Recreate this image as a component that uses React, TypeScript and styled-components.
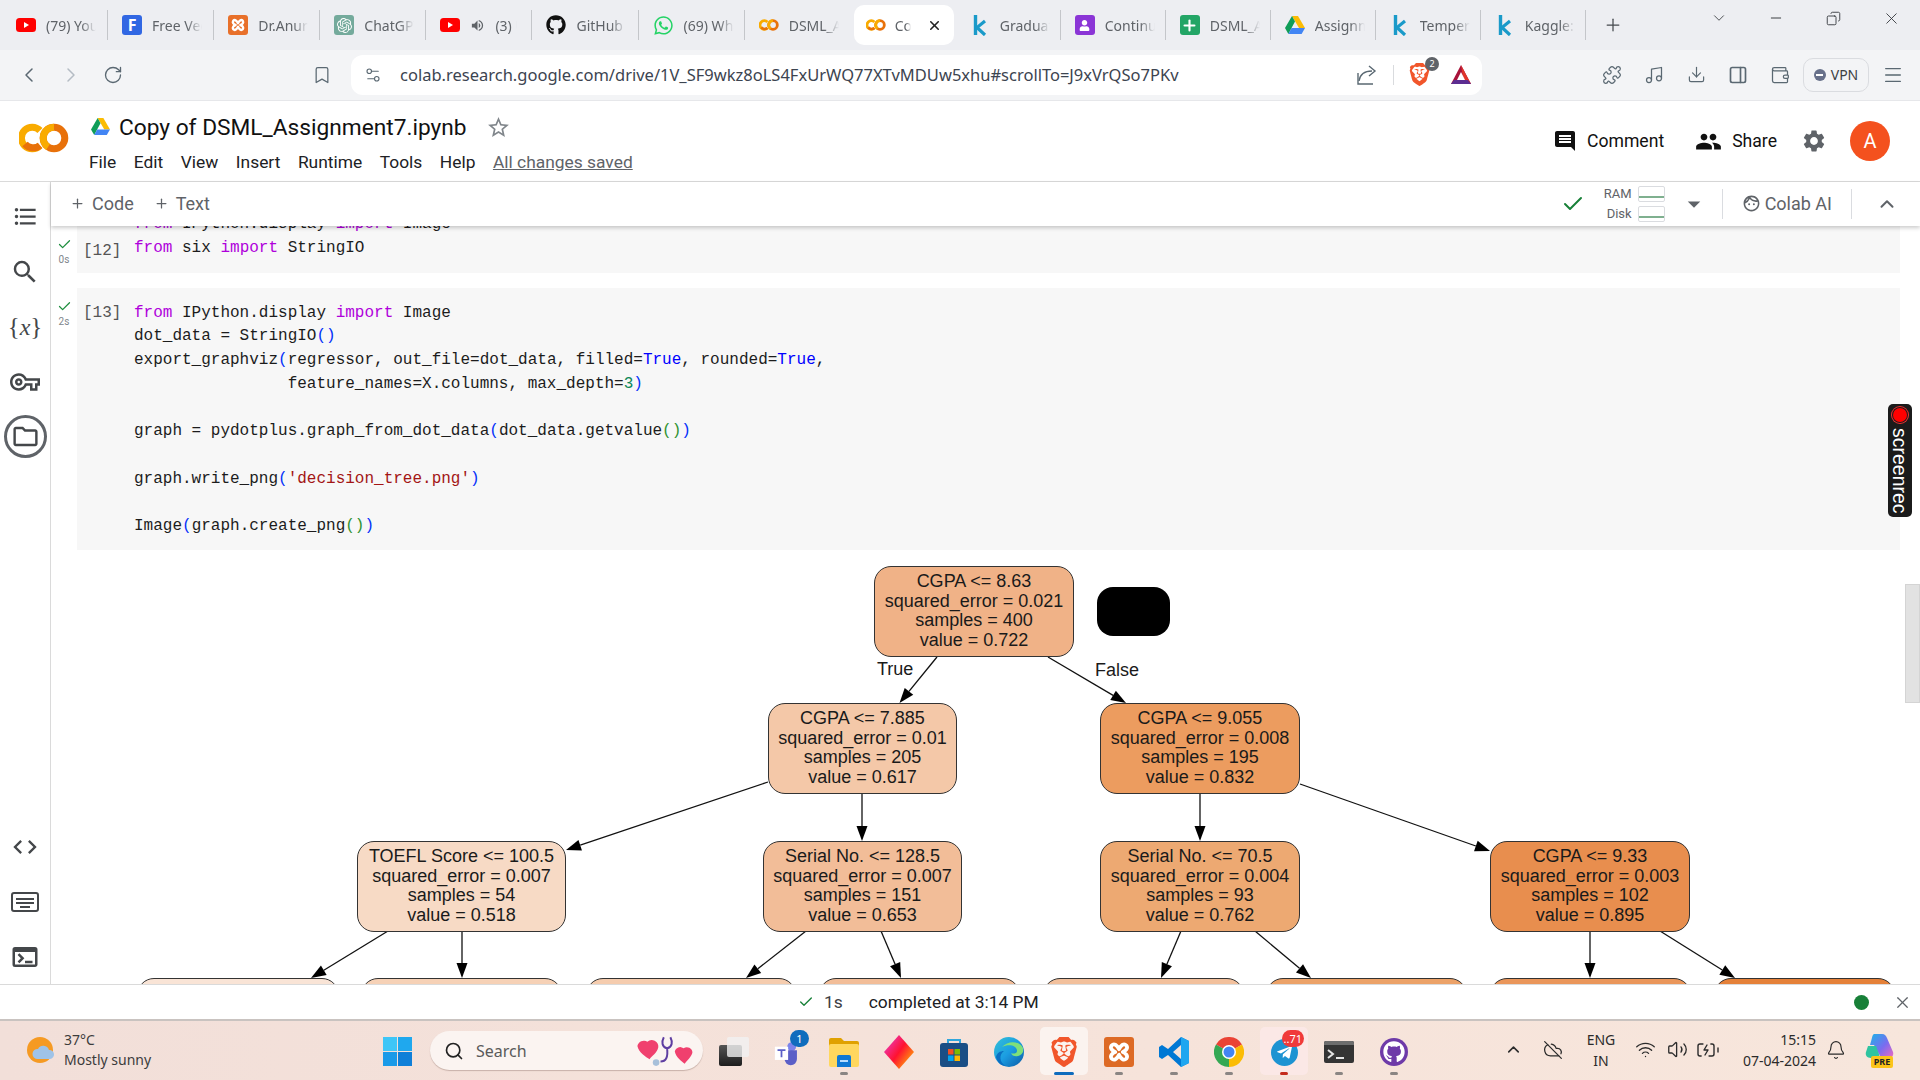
import React from "react";
import styled, { createGlobalStyle } from "styled-components";
import {
  ChevronDown, ChevronLeft, ChevronRight, ChevronUp, RotateCw, Bookmark, Settings2, Puzzle, Music,
  Download, PanelRight, Wallet, Menu, Plus, X, Minus, Copy, Check, Search, Wifi, Volume2, BatteryCharging, Bell, CloudOff,
} from "lucide-react";
import {
  MdComment, MdPeople, MdSettings, MdStarBorder, MdFormatListBulleted, MdSearch, MdOutlineVpnKey, MdOutlineFolder,
  MdCode, MdOutlineTerminal, MdArrowDropDown, MdOutlineFace, MdVolumeUp,
} from "react-icons/md";
import { FaGithub, FaWhatsapp, FaTelegramPlane, FaUser } from "react-icons/fa";
import { SiOpenai, SiBrave } from "react-icons/si";

const Global = createGlobalStyle`
  html, body { margin: 0; padding: 0; background: #fff; overflow: hidden; }
  * { box-sizing: border-box; }
`;

const Page = styled.div`
  position: relative;
  width: 1920px;
  height: 1080px;
  display: flex;
  flex-direction: column;
  overflow: hidden;
  font-family: "Noto Sans", sans-serif;
  color: #202124;
`;

/* browser tabs */
const TabStrip = styled.div`
  height: 50px;
  flex: none;
  display: flex;
  align-items: center;
  padding-left: 2px;
  background: #edeef2;
`;

const Tab = styled.div<{ $sep?: boolean; $w: number }>`
  position: relative;
  width: ${(p) => p.$w}px;
  height: 30px;
  flex: none;
  display: flex;
  align-items: center;
  gap: 10px;
  padding-left: 14px;
  &::after {
    content: "";
    position: absolute;
    right: 0;
    top: 0;
    bottom: 0;
    width: 1px;
    background: ${(p) => (p.$sep === false ? "transparent" : "#c4c6ca")};
  }
`;

const ActiveTab = styled.div`
  width: 100px;
  height: 40px;
  flex: none;
  margin: 0 2px 0 3px;
  display: flex;
  align-items: center;
  gap: 9px;
  padding-left: 12px;
  background: #fff;
  border-radius: 10px;
  font-size: 14px;
  color: #5f6368;
`;

const TabTitle = styled.span<{ $w?: number }>`
  width: ${(p) => p.$w ?? 50}px;
  overflow: hidden;
  white-space: nowrap;
  font-size: 14px;
  color: #5f6368;
  -webkit-mask-image: linear-gradient(90deg, #000 70%, transparent);
`;

const BoxIcon = styled.div<{ $bg: string; $size?: number; $round?: boolean }>`
  width: ${(p) => p.$size ?? 20}px;
  height: ${(p) => p.$size ?? 20}px;
  flex: none;
  display: flex;
  align-items: center;
  justify-content: center;
  border-radius: ${(p) => (p.$round ? "50%" : "3px")};
  background: ${(p) => p.$bg};
  color: #fff;
`;

const LetterF = styled.b`
  font-size: 16px;
`;

const NewTab = styled.div`
  width: 40px;
  flex: none;
  margin-left: 7px;
  display: flex;
  justify-content: center;
  color: #45494e;
`;

const WindowControls = styled.div`
  margin-left: auto;
  align-self: flex-start;
  height: 36px;
  display: flex;
`;

const WinSlot = styled.div`
  width: 57.5px;
  display: flex;
  align-items: center;
  justify-content: center;
  color: #2f3337;
`;

/* browser toolbar */
const BrowserBar = styled.div`
  height: 51px;
  flex: none;
  display: flex;
  align-items: center;
  padding: 0 0 1px 8px;
  background: #f3f4f6;
  border-bottom: 1px solid #e6e7ea;
`;

const BarSlot = styled.div<{ $ml?: number; $c?: string }>`
  width: 42px;
  flex: none;
  margin-left: ${(p) => p.$ml ?? 0}px;
  display: flex;
  align-items: center;
  justify-content: center;
  color: ${(p) => p.$c ?? "#5a6872"};
`;

const AddressBar = styled.div`
  width: 1131px;
  height: 40px;
  flex: none;
  margin-left: 8px;
  display: flex;
  align-items: center;
  padding-left: 13px;
  background: #fff;
  border-radius: 12px;
  color: #5a6872;
`;

const Url = styled.span`
  margin-left: 18px;
  font-size: 16.5px;
  color: #3c4450;
  white-space: nowrap;
`;

const AddressEnd = styled.div`
  margin-left: auto;
  padding-right: 10px;
  display: flex;
  align-items: center;
`;

const BarDivider = styled.div`
  width: 1px;
  height: 20px;
  margin: 0 14px 0 15px;
  background: #d9dbde;
`;

const BraveBadge = styled.div`
  position: relative;
  margin-right: 19px;
  display: flex;
  color: #f1562b;
`;

const CountDot = styled.span`
  position: absolute;
  top: -6px;
  right: -8px;
  width: 14px;
  height: 14px;
  border-radius: 50%;
  background: #5f6368;
  color: #fff;
  font-size: 9px;
  line-height: 14px;
  text-align: center;
`;

const VpnPill = styled.div`
  width: 66px;
  height: 34px;
  flex: none;
  margin-left: 2px;
  display: flex;
  align-items: center;
  justify-content: center;
  gap: 5px;
  border: 1px solid #dadce0;
  border-radius: 10px;
  font-size: 14px;
  color: #3c4043;
`;

const VpnDot = styled.span`
  width: 12px;
  height: 12px;
  border-radius: 50%;
  background: #67708a;
  display: flex;
  align-items: center;
  justify-content: center;
  &::after { content: ""; width: 7px; height: 2px; background: #fff; }
`;

/* colab header */
const ColabHeader = styled.header`
  height: 81px;
  flex: none;
  display: flex;
  background: #fff;
  border-bottom: 1px solid #dadada;
  font-family: Roboto, sans-serif;
`;

const LogoWrap = styled.div`
  width: 50px;
  flex: none;
  margin: 22px 0 0 19px;
`;

const TitleCol = styled.div`
  margin-left: 20px;
  padding-top: 12px;
`;

const TitleRow = styled.div`
  height: 28px;
  display: flex;
  align-items: center;
  padding-left: 2px;
`;

const Title = styled.h1`
  margin: 0 0 0 9px;
  font-size: 22.7px;
  font-weight: 400;
  color: #111;
`;

const StarWrap = styled.span`
  margin-left: 19px;
  display: flex;
  color: #80868b;
`;

const MenuRow = styled.nav`
  height: 24px;
  margin-top: 9px;
  display: flex;
  align-items: center;
  gap: 17.5px;
  font-size: 17.4px;
  color: #202124;
`;

const Saved = styled.span`
  color: #5f6368;
  text-decoration: underline;
`;

const HeaderActions = styled.div`
  margin-left: auto;
  padding-right: 30px;
  display: flex;
  align-items: center;
  font-size: 17.6px;
`;

const ActionBtn = styled.div<{ $ml?: number; $gap?: number }>`
  margin-left: ${(p) => p.$ml ?? 0}px;
  display: flex;
  align-items: center;
  gap: ${(p) => p.$gap ?? 10}px;
  color: #111;
`;

const Avatar = styled.div`
  width: 40px;
  height: 40px;
  margin-left: 23px;
  border-radius: 50%;
  background: #f4511e;
  color: #fff;
  font-size: 20px;
  display: flex;
  align-items: center;
  justify-content: center;
`;

/* body */
const Body = styled.div`
  flex: 1;
  min-height: 0;
  display: flex;
  font-family: Roboto, sans-serif;
`;

const Sidebar = styled.aside`
  width: 51px;
  flex: none;
  padding-top: 7px;
  display: flex;
  flex-direction: column;
  justify-content: space-between;
  border-right: 1px solid #dadada;
  color: #44474a;
`;

const SideGroup = styled.div`
  display: flex;
  flex-direction: column;
`;

const SideSlot = styled.div`
  height: 55px;
  display: flex;
  align-items: center;
  justify-content: center;
`;

const FolderRing = styled.div`
  width: 43px;
  height: 43px;
  border: 3px solid #5f6368;
  border-radius: 50%;
  display: flex;
  align-items: center;
  justify-content: center;
`;

const VarText = styled.span`
  font-family: "Liberation Serif", serif;
  font-size: 25px;
  & i { font-size: 24px; }
`;

const Workspace = styled.div`
  flex: 1;
  min-width: 0;
  display: flex;
  flex-direction: column;
`;

const Toolbar = styled.div`
  position: relative;
  z-index: 2;
  height: 44px;
  flex: none;
  display: flex;
  align-items: center;
  padding: 0 20px 1px 19px;
  background: #fff;
  box-shadow: 0 2px 4px rgba(0, 0, 0, 0.2);
  font-size: 18px;
  color: #5f6368;
`;

const AddBtn = styled.div`
  margin-right: 20px;
  display: flex;
  align-items: center;
  gap: 7px;
`;

const ToolbarRight = styled.div`
  margin-left: auto;
  padding-right: 2px;
  display: flex;
  align-items: center;
`;

const Resources = styled.div`
  margin-left: 19px;
  display: grid;
  grid-template-columns: auto 27px;
  column-gap: 6px;
  row-gap: 4px;
  font-size: 13px;
  text-align: right;
  line-height: 16px;
`;

const Meter = styled.div`
  height: 16px;
  border: 1px solid #dadce0;
  border-radius: 2px;
  display: flex;
  align-items: flex-end;
  padding-bottom: 3px;
  &::after { content: ""; width: 100%; height: 2px; background: #7fb08f; }
`;

const ToolDivider = styled.div<{ $ml: number; $mr: number }>`
  width: 1px;
  height: 30px;
  margin: 0 ${(p) => p.$mr}px 0 ${(p) => p.$ml}px;
  background: #dadce0;
`;

const ColabAi = styled.div`
  display: flex;
  align-items: center;
  gap: 4px;
  color: #5f6368;
`;

const CaretWrap = styled.span`
  margin-left: 14px;
  display: flex;
`;

const Scroller = styled.div`
  position: relative;
  flex: 1;
  min-height: 0;
  overflow: hidden;
  padding-right: 20px;
`;

const Cell = styled.div<{ $mt: number }>`
  margin-top: ${(p) => p.$mt}px;
  display: flex;
`;

const Gutter = styled.div<{ $pt: number }>`
  width: 26px;
  flex: none;
  padding-top: ${(p) => p.$pt}px;
  display: flex;
  flex-direction: column;
  align-items: center;
  color: #1e8e3e;
`;

const Elapsed = styled.span`
  margin-top: 2px;
  font-size: 10px;
  line-height: 12px;
  color: #80868b;
`;

const CellBody = styled.div<{ $pt: number; $pb: number }>`
  flex: 1;
  display: flex;
  padding: ${(p) => p.$pt}px 0 ${(p) => p.$pb}px;
  background: #f7f7f7;
`;

const ExecCount = styled.span<{ $last?: boolean }>`
  width: 57px;
  flex: none;
  align-self: ${(p) => (p.$last ? "flex-end" : "flex-start")};
  margin-bottom: ${(p) => (p.$last ? "-3px" : "0")};
  padding-left: 6px;
  font-family: "Liberation Mono", monospace;
  font-size: 16px;
  line-height: 23.75px;
  color: #555;
`;

const Code = styled.pre`
  margin: 0;
  font-family: "Liberation Mono", monospace;
  font-size: 16px;
  line-height: 23.75px;
  color: #1c1c1c;
`;

const colors = { k: "#af00db", c: "#0000ff", p: "#0431fa", g: "#319331", s: "#a31515", n: "#098658" };

const Tok = styled.span<{ $t: keyof typeof colors }>`
  color: ${(p) => colors[p.$t]};
`;

/* decision tree */
const Diagram = styled.div`
  position: relative;
  height: 440px;
`;

const EdgeLayer = styled.svg`
  position: absolute;
  inset: 0;
  width: 100%;
  height: 100%;
`;

const TreeNode = styled.div<{ $x: number; $y: number; $w: number; $bg: string }>`
  position: absolute;
  left: ${(p) => p.$x}px;
  top: ${(p) => p.$y}px;
  width: ${(p) => p.$w}px;
  height: 91px;
  padding-top: 5px;
  border: 1.5px solid #333;
  border-radius: 17px;
  background: ${(p) => p.$bg};
  font-family: "Liberation Sans", sans-serif;
  font-size: 18px;
  line-height: 19.7px;
  text-align: center;
  white-space: nowrap;
  color: #1a1a1a;
`;

const EdgeLabel = styled.span<{ $x: number; $y: number }>`
  position: absolute;
  left: ${(p) => p.$x}px;
  top: ${(p) => p.$y}px;
  font-family: "Liberation Sans", sans-serif;
  font-size: 18px;
  line-height: 20px;
  color: #1a1a1a;
`;

const Redaction = styled.div`
  position: absolute;
  left: 1046px;
  top: 37px;
  width: 73px;
  height: 49px;
  border-radius: 16px;
  background: #000;
`;

const ScrollThumb = styled.div`
  position: absolute;
  right: 0;
  top: 358px;
  width: 15px;
  height: 119px;
  background: #e2e2e2;
  border: 1px solid #d4d4d4;
`;

/* status bar */
const StatusBar = styled.div`
  height: 37px;
  flex: none;
  position: relative;
  z-index: 2;
  display: flex;
  align-items: center;
  padding-left: 798px;
  background: #fff;
  border-top: 1px solid #dadada;
  border-bottom: 2px solid #c9c3c0;
  font-family: Roboto, sans-serif;
  font-size: 17.4px;
  color: #3c4043;
`;

const Completed = styled.span`
  margin-left: 26px;
  color: #202124;
`;

const ElapsedTotal = styled.span`
  margin-left: 10px;
`;

const StatusEnd = styled.div`
  margin-left: auto;
  padding-right: 8px;
  display: flex;
  align-items: center;
  gap: 24px;
  color: #5f6368;
`;

const GreenDot = styled.span`
  width: 15px;
  height: 15px;
  border-radius: 50%;
  background: #188038;
`;

/* windows taskbar */
const Taskbar = styled.div`
  height: 59px;
  flex: none;
  display: flex;
  align-items: flex-start;
  padding-left: 27px;
  background: linear-gradient(90deg, #f2dfd9, #f6e3da 60%, #f7e6dc);
  color: #202020;
`;

const Weather = styled.div`
  width: 356px;
  height: 57px;
  flex: none;
  display: flex;
  align-items: center;
  gap: 9px;
`;

const WeatherText = styled.div`
  font-size: 14px;
  line-height: 20px;
  color: #3c3c3c;
`;

const WinLogo = styled.div`
  width: 29px;
  height: 29px;
  flex: none;
  margin-top: 16px;
  display: grid;
  grid-template-columns: 1fr 1fr;
  gap: 1px;
`;

const WinPane = styled.span<{ $bg: string }>`
  background: ${(p) => p.$bg};
`;

const SearchPill = styled.div`
  width: 273px;
  height: 39px;
  flex: none;
  margin: 10px 0 0 18px;
  display: flex;
  align-items: center;
  gap: 12px;
  padding: 0 4px 0 14px;
  background: #fbf4f1;
  border-radius: 20px;
  box-shadow: 0 1px 1px rgba(120, 90, 80, 0.35);
  font-size: 16px;
  color: #5a5a5a;
`;

const SearchArt = styled.div`
  margin-left: auto;
  display: flex;
`;

const AppRow = styled.div`
  margin-left: 3.5px;
  display: flex;
`;

const TaskItem = styled.div<{ $tile?: string }>`
  position: relative;
  width: 55px;
  height: 59px;
  flex: none;
  padding-top: 16px;
  display: flex;
  flex-direction: column;
  align-items: center;
  gap: 5px;
  &::before {
    content: "";
    display: ${(p) => (p.$tile ? "block" : "none")};
    position: absolute;
    inset: 6px 3.5px 5px;
    border-radius: 5px;
    background: ${(p) => p.$tile};
  }
  & > * { position: relative; }
`;

const AppIcon = styled.div`
  width: 30px;
  height: 30px;
  display: flex;
  align-items: center;
  justify-content: center;
`;

const Pip = styled.span<{ $c?: string; $w?: number }>`
  width: ${(p) => p.$w ?? 8}px;
  height: 3px;
  border-radius: 2px;
  background: ${(p) => p.$c ?? "#8a8583"};
`;

const NoPip = styled.span`
  height: 3px;
`;

const Badge = styled.span<{ $bg: string; $w: number }>`
  position: absolute;
  top: -7px;
  right: -5px;
  min-width: ${(p) => p.$w}px;
  height: 17px;
  padding: 0 2px;
  border-radius: 9px;
  background: ${(p) => p.$bg};
  color: #fff;
  font-size: 11px;
  line-height: 17px;
  text-align: center;
`;

const Tray = styled.div`
  margin-left: auto;
  padding-right: 16px;
  height: 57px;
  display: flex;
  align-items: center;
`;

const TraySlot = styled.div<{ $w: number }>`
  width: ${(p) => p.$w}px;
  flex: none;
  display: flex;
  flex-direction: column;
  align-items: center;
  justify-content: center;
  font-size: 14px;
  line-height: 21px;
  color: #2b2b2b;
`;

const Clock = styled.div`
  width: 92px;
  flex: none;
  font-size: 14px;
  line-height: 21px;
  text-align: right;
  color: #2b2b2b;
`;

const CopilotWrap = styled.div`
  position: relative;
  width: 30px;
  height: 34px;
`;

const PreTag = styled.span`
  position: absolute;
  left: 6px;
  bottom: -1px;
  width: 22px;
  height: 12px;
  border-radius: 2px;
  background: #fcc419;
  color: #222;
  font-size: 9px;
  font-weight: 700;
  line-height: 12px;
  text-align: center;
`;

const ScreenRec = styled.div`
  position: absolute;
  left: 1888px;
  top: 404px;
  width: 24px;
  height: 113px;
  z-index: 3;
  display: flex;
  flex-direction: column;
  align-items: center;
  padding-top: 4px;
  background: #1b1b1b;
  border-radius: 5px;
`;

const RecDot = styled.span`
  width: 14px;
  height: 14px;
  flex: none;
  border-radius: 50%;
  background: #f00;
  box-shadow: 0 0 0 1px #1b1b1b, 0 0 0 2px #e33;
`;

const RecText = styled.span`
  margin-top: 6px;
  writing-mode: vertical-rl;
  font-family: "Liberation Sans", sans-serif;
  font-size: 19.5px;
  line-height: 22px;
  color: #fff;
`;

/* brand drawings */
const Youtube = () => (
  <svg width="20" height="14" viewBox="0 0 20 14">
    <rect width="20" height="14" rx="3.5" fill="#f00" />
    <path d="M8 4l5 3-5 3z" fill="#fff" />
  </svg>
);

const KaggleK = () => (
  <svg width="20" height="22" viewBox="0 0 20 22" fill="none" stroke="#1a9ac9">
    <path d="M5.500 1v20" strokeWidth="3.400" />
    <path d="M15 7l-8 6.500 8 7.500" strokeWidth="3.200" />
  </svg>
);

const XamppMark = ({ s }: { s: number }) => (
  <svg width={s} height={s} viewBox="0 0 30 30" fill="none" stroke="#fff" strokeWidth="4" strokeLinejoin="round">
    <path d="M7 8c3-3 6 0 8 4 2-4 5-7 8-4 2 3-1 6-4 7 3 1 6 4 4 7-3 3-6 0-8-4-2 4-5 7-8 4-2-3 1-6 4-7-3-1-6-4-4-7z" />
  </svg>
);

const ColabLogo = ({ w = 50 }: { w?: number }) => (
  <svg width={w} height={(w * 30) / 50} viewBox="0 0 50 30" fill="none" strokeWidth="7">
    <path d="M21 7.500A10.800 10.800 0 1 0 21 22.500" stroke="#f9ab00" />
    <path d="M6 21A10.800 10.800 0 0 0 21 22.500" stroke="#e8710a" />
    <circle cx="35" cy="15" r="10.800" stroke="#e8710a" />
    <path d="M35 4.200A10.800 10.800 0 0 0 29 24" stroke="#f9ab00" />
  </svg>
);

const Drive = ({ s = 20 }: { s?: number }) => (
  <svg width={s} height={(s * 18) / 20} viewBox="0 0 20 18">
    <path d="M7 0h6l7 12h-6z" fill="#fbbc04" />
    <path d="M7 0l3 5.500L3.400 18 0 12z" fill="#0f9d58" />
    <path d="M6.500 12H20l-3.400 6H3.400z" fill="#4285f4" />
  </svg>
);

const ShareOut = () => (
  <svg width="22" height="22" viewBox="0 0 22 22" fill="none" stroke="currentColor" strokeWidth="1.400">
    <path d="M2 9v11h15" />
    <path d="M3 17c1-7 6-10 13-10" />
    <path d="M13 2l6 5-6 5" />
  </svg>
);

const KeyboardPanel = () => (
  <svg width="28" height="22" viewBox="0 0 28 22" fill="none" stroke="currentColor" strokeWidth="2">
    <rect x="1" y="2" width="26" height="18" rx="2" />
    <path d="M5 8h18" />
    <path d="M5 12h18" />
    <path d="M9 16h10" />
  </svg>
);

const Chrome = () => (
  <svg width="30" height="30" viewBox="0 0 30 30">
    <path d="M15 15L2 7.500A15 15 0 0 1 28 7.500z" fill="#ea4335" />
    <path d="M15 15L28 7.500A15 15 0 0 1 15 30z" fill="#fbbc04" />
    <path d="M15 15L15 30A15 15 0 0 1 2 7.500z" fill="#34a853" />
    <circle cx="15" cy="15" r="7" fill="#fff" />
    <circle cx="15" cy="15" r="5.500" fill="#4285f4" />
  </svg>
);

const Edge = () => (
  <svg width="30" height="30" viewBox="0 0 30 30">
    <defs>
      <linearGradient id="edg" x1="0" y1="0" x2="1" y2="1">
        <stop offset="0" stopColor="#35c1d5" />
        <stop offset="0.5" stopColor="#1b9de2" />
        <stop offset="1" stopColor="#0c59a4" />
      </linearGradient>
    </defs>
    <circle cx="15" cy="15" r="15" fill="url(#edg)" />
    <path d="M29 11C26 4 14 3 8 10c6-3 15-2 15 4 0 3-5 3-6 2 1 4 9 5 12-1z" fill="#7fe07a" />
    <path d="M10 14c-5 3-5 12 2 15-5 0-9-4-10-9 1-4 4-6 8-6z" fill="#0a6fc2" />
  </svg>
);

const VsCode = () => (
  <svg width="30" height="30" viewBox="0 0 30 30">
    <path fillRule="evenodd" d="M22 0l8 4v22l-8 4-13-12-6 4-3-2v-10l3-2 6 4zM22 8l-8 7 8 7z" fill="#0078d4" />
    <path d="M22 0l8 4v22l-8 4z" fill="#1fa6f0" />
  </svg>
);

const TaskView = () => (
  <svg width="30" height="30" viewBox="0 0 30 30">
    <defs>
      <linearGradient id="tv" x1="0" y1="0" x2="0" y2="1">
        <stop offset="0" stopColor="#555" />
        <stop offset="1" stopColor="#1d1d1d" />
      </linearGradient>
    </defs>
    <rect x="0" y="8" width="23" height="21" rx="2" fill="url(#tv)" />
    <rect x="8" y="0" width="22" height="20" rx="2" fill="#f1f1f1" opacity="0.8" />
  </svg>
);

const Teams = () => (
  <svg width="34" height="30" viewBox="0 0 34 30">
    <circle cx="20" cy="9" r="5" fill="#7b83eb" />
    <path d="M12 13h14v10a7 7 0 0 1-14 0z" fill="#5b5fc7" />
    <rect x="1" y="9" width="15" height="15" fill="#fff" />
    <path d="M4 12h9v2H9.500v7h-2v-7H4z" fill="#5b5fc7" />
  </svg>
);

const FolderApp = () => (
  <svg width="30" height="30" viewBox="0 0 30 30">
    <path d="M0 3a2 2 0 0 1 2-2h10l3 3h13a2 2 0 0 1 2 2v3H0z" fill="#e0a100" />
    <rect y="7" width="30" height="23" rx="2" fill="#ffd75e" />
    <path d="M8 20a2 2 0 0 1 2-2h10a2 2 0 0 1 2 2v10H8z" fill="#0f78d4" />
    <rect x="11" y="23" width="8" height="2" fill="#b5dcff" />
  </svg>
);

const Diamond = () => (
  <svg width="30" height="34" viewBox="0 0 30 34">
    <defs>
      <linearGradient id="dia" x1="0" y1="0.1" x2="1" y2="0.9">
        <stop offset="0" stopColor="#e83fd0" />
        <stop offset="0.5" stopColor="#ff1230" />
        <stop offset="1" stopColor="#ffc400" />
      </linearGradient>
    </defs>
    <path d="M15 0l15 17-15 17L0 17z" fill="url(#dia)" />
  </svg>
);

const Store = () => (
  <svg width="30" height="30" viewBox="0 0 30 30">
    <path d="M9 6V3h12v3" fill="none" stroke="#30a6dc" strokeWidth="2" />
    <rect x="1" y="6" width="28" height="24" rx="3" fill="#1a4e85" />
    <rect x="9" y="12" width="5.500" height="5.500" fill="#f25022" />
    <rect x="15.500" y="12" width="5.500" height="5.500" fill="#7fba00" />
    <rect x="9" y="18.500" width="5.500" height="5.500" fill="#00a4ef" />
    <rect x="15.500" y="18.500" width="5.500" height="5.500" fill="#ffb900" />
  </svg>
);

const TerminalApp = () => (
  <svg width="30" height="24" viewBox="0 0 30 24">
    <rect width="30" height="22" y="1" rx="2" fill="#343434" />
    <path d="M0 3a2 2 0 0 1 2-2h26a2 2 0 0 1 2 2v2H12V5H0z" fill="#6d6d6d" />
    <path d="M4 10l5 4-5 4" fill="none" stroke="#e4e4e4" strokeWidth="2" />
    <path d="M12 18h8" stroke="#e4e4e4" strokeWidth="2" />
  </svg>
);

const Hearts = () => (
  <svg width="66" height="31" viewBox="0 0 60 28">
    <path d="M4 10a6 6 0 0 1 9-4 6 6 0 0 1 10 5c-1 5-6 8-8 11-3-2-10-6-11-12z" fill="#f0406e" />
    <path d="M38 15a5 5 0 0 1 8-3 5 5 0 0 1 8 4c-1 4-5 7-7 10-3-2-8-6-9-11z" fill="#f0406e" />
    <path d="M28 2c-2 4-2 9 3 10 5-1 5-6 3-10M31 12c1 8-1 12-6 12" fill="none" stroke="#5e3ea1" strokeWidth="1.800" />
    <circle cx="21" cy="25" r="3" fill="#a7c0da" />
  </svg>
);

const Copilot = () => (
  <svg width="30" height="26" viewBox="0 0 30 26">
    <defs>
      <linearGradient id="cop" x1="0" y1="0" x2="1" y2="1">
        <stop offset="0" stopColor="#1bb3e8" />
        <stop offset="0.55" stopColor="#7a6cf0" />
        <stop offset="1" stopColor="#f06ac0" />
      </linearGradient>
    </defs>
    <path d="M9 1h8c3 0 4 2 5 4l6 14c1 3-1 6-4 6h-5c-3 0-4-2-5-4L9 12H5C7 6 7 2 9 1z" fill="url(#cop)" />
    <path d="M3 13h8l3 8c1 2 0 4-2 4H6c-4 0-6-3-5-6z" fill="#2fc4a0" />
  </svg>
);

const Triangle = () => (
  <svg width="22" height="22" viewBox="0 0 22 22">
    <path d="M11 1L21 20H1z" fill="#a8123a" />
    <path d="M11 1L21 20H14z" fill="#e0342a" />
    <path d="M1 20h20l-3-4H4z" fill="#5c2d91" />
    <path d="M11 8l4 8H7z" fill="#fff" />
  </svg>
);

const SpeakerTab = () => (
  <>
    <Youtube />
    <MdVolumeUp size={15} color="#5f6368" />
  </>
);

/* tab data */
const tabsLeft: { icon: React.ReactNode; title: string; w?: number }[] = [
  { icon: <Youtube />, title: "(79) YouTube" },
  { icon: <BoxIcon $bg="#3167e3"><LetterF>F</LetterF></BoxIcon>, title: "Free Vector" },
  { icon: <BoxIcon $bg="#e8702a"><XamppMark s={18} /></BoxIcon>, title: "Dr.Anurag" },
  { icon: <BoxIcon $bg="#74aa9c"><SiOpenai size={15} /></BoxIcon>, title: "ChatGPT" },
  { icon: <SpeakerTab />, title: "(3) University", w: 22 },
  { icon: <FaGithub size={20} color="#111" />, title: "GitHub" },
  { icon: <FaWhatsapp size={21} color="#25d366" />, title: "(69) WhatsApp" },
  { icon: <ColabLogo w={20} />, title: "DSML_Assignment" },
];

const tabsRight: { icon: React.ReactNode; title: string }[] = [
  { icon: <KaggleK />, title: "Graduate" },
  { icon: <BoxIcon $bg="#8b35d6"><FaUser size={11} /></BoxIcon>, title: "Continue" },
  { icon: <BoxIcon $bg="#23a566"><Plus size={17} strokeWidth={3} /></BoxIcon>, title: "DSML_Assign" },
  { icon: <Drive />, title: "Assignment" },
  { icon: <KaggleK />, title: "Temperature" },
  { icon: <KaggleK />, title: "Kaggle: Your" },
];

/* tree data, in page coordinates */
const DX = 51;
const DY = 550;

const nodes = [
  { x: 874, y: 566, w: 200, bg: "#f0b287", lines: ["CGPA <= 8.63", "squared_error = 0.021", "samples = 400", "value = 0.722"] },
  { x: 768, y: 703, w: 189, bg: "#f4c8a8", lines: ["CGPA <= 7.885", "squared_error = 0.01", "samples = 205", "value = 0.617"] },
  { x: 1100, y: 703, w: 200, bg: "#ec9c5f", lines: ["CGPA <= 9.055", "squared_error = 0.008", "samples = 195", "value = 0.832"] },
  { x: 357, y: 841, w: 209, bg: "#f7dac5", lines: ["TOEFL Score <= 100.5", "squared_error = 0.007", "samples = 54", "value = 0.518"] },
  { x: 763, y: 841, w: 199, bg: "#f2bd98", lines: ["Serial No. <= 128.5", "squared_error = 0.007", "samples = 151", "value = 0.653"] },
  { x: 1100, y: 841, w: 200, bg: "#eda972", lines: ["Serial No. <= 70.5", "squared_error = 0.004", "samples = 93", "value = 0.762"] },
  { x: 1490, y: 841, w: 200, bg: "#e88e4e", lines: ["CGPA <= 9.33", "squared_error = 0.003", "samples = 102", "value = 0.895"] },
];

const stubs = [
  { x: 137, w: 202, bg: "#f9e4d6" },
  { x: 361, w: 201, bg: "#f6d1b6" },
  { x: 586, w: 210, bg: "#f5ccae" },
  { x: 819, w: 201, bg: "#f2bd98" },
  { x: 1043, w: 201, bg: "#f2c09c" },
  { x: 1266, w: 201, bg: "#eca268" },
  { x: 1490, w: 201, bg: "#ea965a" },
  { x: 1714, w: 181, bg: "#e58139" },
];

const edges = [
  [937, 657, 899.5, 703], [1048, 657, 1126, 703], [768, 782, 566, 850], [862, 794, 862, 841],
  [1200, 794, 1200, 841], [1300, 784, 1490, 851], [388, 931, 311, 978], [462, 931, 462, 978],
  [806, 931, 746, 978], [881, 931, 901, 978], [1181, 931, 1161, 978], [1255, 931, 1311, 978],
  [1590, 931, 1590, 978], [1660, 931, 1735, 978],
];

const Arrow = ({ e }: { e: number[] }) => {
  const [x1, y1, x2, y2] = e.map((v, i) => v - (i % 2 ? DY : DX));
  const len = Math.hypot(x2 - x1, y2 - y1);
  const ux = (x2 - x1) / len;
  const uy = (y2 - y1) / len;
  const bx = x2 - ux * 15;
  const by = y2 - uy * 15;
  const pts = `${x2},${y2} ${bx - uy * 5.5},${by + ux * 5.5} ${bx + uy * 5.5},${by - ux * 5.5}`;
  return (
    <>
      <line x1={x1} y1={y1} x2={bx} y2={by} stroke="#111" strokeWidth="1.3" />
      <polygon points={pts} fill="#000" />
    </>
  );
};

const App = () => {
  return (
    <Page>
      <Global />
      <TabStrip>
        {tabsLeft.map((t, i) => (
          <Tab key={t.title} $w={106.1} $sep={i < 7}>
            {t.icon}
            <TabTitle $w={t.w}>{t.title}</TabTitle>
          </Tab>
        ))}
        <ActiveTab>
          <ColabLogo w={20} />
          <TabTitle $w={16}>Copy</TabTitle>
          <X size={15} color="#222" strokeWidth={2.5} style={{ marginLeft: 7 }} />
        </ActiveTab>
        {tabsRight.map((t) => (
          <Tab key={t.title} $w={105}>
            {t.icon}
            <TabTitle>{t.title}</TabTitle>
          </Tab>
        ))}
        <NewTab>
          <Plus size={20} strokeWidth={1.5} />
        </NewTab>
        <WindowControls>
          <WinSlot><ChevronDown size={18} strokeWidth={1.1} /></WinSlot>
          <WinSlot><Minus size={16} strokeWidth={1.4} /></WinSlot>
          <WinSlot><Copy size={15} strokeWidth={1.4} style={{ transform: "scaleX(-1)" }} /></WinSlot>
          <WinSlot><X size={19} strokeWidth={1.1} /></WinSlot>
        </WindowControls>
      </TabStrip>

      <BrowserBar>
        <BarSlot><ChevronLeft size={24} strokeWidth={1.5} /></BarSlot>
        <BarSlot $c="#b4bcc4"><ChevronRight size={24} strokeWidth={1.5} /></BarSlot>
        <BarSlot><RotateCw size={20} strokeWidth={1.6} /></BarSlot>
        <BarSlot $ml={167}><Bookmark size={20} strokeWidth={1.5} /></BarSlot>
        <AddressBar>
          <Settings2 size={18} strokeWidth={1.5} />
          <Url>colab.research.google.com/drive/1V_SF9wkz8oLS4FxUrWQ77XTvMDUw5xhu#scrollTo=J9xVrQSo7PKv</Url>
          <AddressEnd>
            <ShareOut />
            <BarDivider />
            <BraveBadge>
              <SiBrave size={23} />
              <CountDot>2</CountDot>
            </BraveBadge>
            <Triangle />
          </AddressEnd>
        </AddressBar>
        <BarSlot $ml={109}><Puzzle size={20} strokeWidth={1.5} /></BarSlot>
        <BarSlot><Music size={20} strokeWidth={1.5} /></BarSlot>
        <BarSlot><Download size={19} strokeWidth={1.5} /></BarSlot>
        <BarSlot><PanelRight size={20} strokeWidth={2} /></BarSlot>
        <BarSlot><Wallet size={20} strokeWidth={1.5} /></BarSlot>
        <VpnPill><VpnDot />VPN</VpnPill>
        <BarSlot $ml={3}><Menu size={22} strokeWidth={1.4} /></BarSlot>
      </BrowserBar>

      <ColabHeader>
        <LogoWrap><ColabLogo /></LogoWrap>
        <TitleCol>
          <TitleRow>
            <Drive s={19} />
            <Title>Copy of DSML_Assignment7.ipynb</Title>
            <StarWrap><MdStarBorder size={25} /></StarWrap>
          </TitleRow>
          <MenuRow>
            <span>File</span>
            <span>Edit</span>
            <span>View</span>
            <span>Insert</span>
            <span>Runtime</span>
            <span>Tools</span>
            <span>Help</span>
            <Saved>All changes saved</Saved>
          </MenuRow>
        </TitleCol>
        <HeaderActions>
          <ActionBtn><MdComment size={24} />Comment</ActionBtn>
          <ActionBtn $ml={31}><MdPeople size={27} />Share</ActionBtn>
          <ActionBtn $ml={24}><MdSettings size={26} color="#5f6368" /></ActionBtn>
          <Avatar>A</Avatar>
        </HeaderActions>
      </ColabHeader>

      <Body>
        <Sidebar>
          <SideGroup>
            <SideSlot><MdFormatListBulleted size={27} /></SideSlot>
            <SideSlot><MdSearch size={30} /></SideSlot>
            <SideSlot><VarText>{"{"}<i>x</i>{"}"}</VarText></SideSlot>
            <SideSlot><MdOutlineVpnKey size={30} /></SideSlot>
            <SideSlot><FolderRing><MdOutlineFolder size={29} /></FolderRing></SideSlot>
          </SideGroup>
          <SideGroup>
            <SideSlot><MdCode size={28} /></SideSlot>
            <SideSlot><KeyboardPanel /></SideSlot>
            <SideSlot><MdOutlineTerminal size={30} /></SideSlot>
          </SideGroup>
        </Sidebar>

        <Workspace>
          <Toolbar>
            <AddBtn><Plus size={15} />Code</AddBtn>
            <AddBtn><Plus size={15} />Text</AddBtn>
            <ToolbarRight>
              <Check size={24} color="#188038" />
              <Resources>
                <span>RAM</span><Meter />
                <span>Disk</span><Meter />
              </Resources>
              <CaretWrap><MdArrowDropDown size={30} /></CaretWrap>
              <ToolDivider $ml={13} $mr={19} />
              <ColabAi><MdOutlineFace size={19} />Colab AI</ColabAi>
              <ToolDivider $ml={19} $mr={24} />
              <ChevronUp size={22} strokeWidth={2.2} />
            </ToolbarRight>
          </Toolbar>

          <Scroller>
            <Cell $mt={-25}>
              <Gutter $pt={36}>
                <Check size={15} />
                <Elapsed>0s</Elapsed>
              </Gutter>
              <CellBody $pt={12} $pb={12}>
                <ExecCount $last>[12]</ExecCount>
                <Code>
                  <Tok $t="k">from</Tok> IPython.display <Tok $t="k">import</Tok> Image{"\n"}
                  <Tok $t="k">from</Tok> six <Tok $t="k">import</Tok> StringIO
                </Code>
              </CellBody>
            </Cell>
            <Cell $mt={15}>
              <Gutter $pt={11}>
                <Check size={15} />
                <Elapsed>2s</Elapsed>
              </Gutter>
              <CellBody $pt={14} $pb={11}>
                <ExecCount>[13]</ExecCount>
                <Code>
                  <Tok $t="k">from</Tok> IPython.display <Tok $t="k">import</Tok> Image{"\n"}
                  dot_data = StringIO<Tok $t="p">()</Tok>{"\n"}
                  export_graphviz<Tok $t="p">(</Tok>regressor, out_file=dot_data, filled=<Tok $t="c">True</Tok>, rounded=<Tok $t="c">True</Tok>,{"\n"}
                  {"                "}feature_names=X.columns, max_depth=<Tok $t="n">3</Tok><Tok $t="p">)</Tok>{"\n\n"}
                  graph = pydotplus.graph_from_dot_data<Tok $t="p">(</Tok>dot_data.getvalue<Tok $t="g">()</Tok><Tok $t="p">)</Tok>{"\n\n"}
                  graph.write_png<Tok $t="p">(</Tok><Tok $t="s">'decision_tree.png'</Tok><Tok $t="p">)</Tok>{"\n\n"}
                  Image<Tok $t="p">(</Tok>graph.create_png<Tok $t="g">()</Tok><Tok $t="p">)</Tok>
                </Code>
              </CellBody>
            </Cell>
            <Diagram>
              <EdgeLayer>
                {edges.map((e) => (
                  <Arrow key={e.join()} e={e} />
                ))}
              </EdgeLayer>
              {nodes.map((n) => (
                <TreeNode key={n.x + "-" + n.y} $x={n.x - DX} $y={n.y - DY} $w={n.w} $bg={n.bg}>
                  {n.lines.map((l) => (
                    <div key={l}>{l}</div>
                  ))}
                </TreeNode>
              ))}
              {stubs.map((n) => (
                <TreeNode key={n.x} $x={n.x - DX} $y={978 - DY} $w={n.w} $bg={n.bg} />
              ))}
              <EdgeLabel $x={826} $y={109}>True</EdgeLabel>
              <EdgeLabel $x={1044} $y={110}>False</EdgeLabel>
              <Redaction />
            </Diagram>
            <ScrollThumb />
          </Scroller>
        </Workspace>
      </Body>

      <StatusBar>
        <Check size={16} color="#188038" />
        <ElapsedTotal>1s</ElapsedTotal>
        <Completed>completed at 3:14 PM</Completed>
        <StatusEnd>
          <GreenDot />
          <X size={19} strokeWidth={1.5} />
        </StatusEnd>
      </StatusBar>

      <Taskbar>
        <Weather>
          <svg width="28" height="30" viewBox="0 0 28 30">
            <circle cx="13" cy="15" r="13" fill="#f59a23" />
            <path d="M10 24a5 5 0 0 1 1-10 6 6 0 0 1 11 1 4.500 4.500 0 0 1 1 9z" fill="#9fc3e8" />
          </svg>
          <WeatherText>
            <div>37°C</div>
            <div>Mostly sunny</div>
          </WeatherText>
        </Weather>
        <WinLogo>
          <WinPane $bg="#3ec6f7" />
          <WinPane $bg="#1fa8ee" />
          <WinPane $bg="#1a9ae8" />
          <WinPane $bg="#0f7fd8" />
        </WinLogo>
        <SearchPill>
          <Search size={20} strokeWidth={2} color="#222" />
          Search
          <SearchArt><Hearts /></SearchArt>
        </SearchPill>
        <AppRow>
          <TaskItem><AppIcon><TaskView /></AppIcon><NoPip /></TaskItem>
          <TaskItem><AppIcon><Teams /><Badge $bg="#0f6cbd" $w={19}>1</Badge></AppIcon><NoPip /></TaskItem>
          <TaskItem><AppIcon><FolderApp /></AppIcon><Pip /></TaskItem>
          <TaskItem><AppIcon><Diamond /></AppIcon><NoPip /></TaskItem>
          <TaskItem><AppIcon><Store /></AppIcon><NoPip /></TaskItem>
          <TaskItem><AppIcon><Edge /></AppIcon><NoPip /></TaskItem>
          <TaskItem $tile="#fbf3ef"><AppIcon><SiBrave size={30} color="#f1562b" /></AppIcon><Pip $c="#0f6cbd" $w={20} /></TaskItem>
          <TaskItem><AppIcon><BoxIcon $bg="#dd6a25" $size={30}><XamppMark s={28} /></BoxIcon></AppIcon><Pip /></TaskItem>
          <TaskItem><AppIcon><VsCode /></AppIcon><Pip /></TaskItem>
          <TaskItem><AppIcon><Chrome /></AppIcon><Pip /></TaskItem>
          <TaskItem $tile="#fbe8e6">
            <AppIcon>
              <BoxIcon $bg="#1d93d2" $size={27} $round><FaTelegramPlane size={17} /></BoxIcon>
              <Badge $bg="#f03a3a" $w={19}>..71</Badge>
            </AppIcon>
            <Pip $c="#c42b1c" />
          </TaskItem>
          <TaskItem><AppIcon><TerminalApp /></AppIcon><Pip /></TaskItem>
          <TaskItem>
            <AppIcon>
              <BoxIcon $bg="#6e3aa8" $size={28} $round><FaGithub size={22} color="#fff" /></BoxIcon>
            </AppIcon>
            <Pip />
          </TaskItem>
        </AppRow>
        <Tray>
          <TraySlot $w={40}><ChevronUp size={19} /></TraySlot>
          <TraySlot $w={40}><CloudOff size={20} strokeWidth={1.5} /></TraySlot>
          <TraySlot $w={56}><span>ENG</span><span>IN</span></TraySlot>
          <TraySlot $w={33}><Wifi size={21} strokeWidth={1.5} /></TraySlot>
          <TraySlot $w={30}><Volume2 size={21} strokeWidth={1.5} /></TraySlot>
          <TraySlot $w={32}><BatteryCharging size={24} strokeWidth={1.4} /></TraySlot>
          <Clock><div>15:15</div><div>07-04-2024</div></Clock>
          <TraySlot $w={40}><Bell size={20} strokeWidth={1.4} /></TraySlot>
          <TraySlot $w={48}>
            <CopilotWrap><Copilot /><PreTag>PRE</PreTag></CopilotWrap>
          </TraySlot>
        </Tray>
      </Taskbar>

      <ScreenRec>
        <RecDot />
        <RecText>screenrec</RecText>
      </ScreenRec>
    </Page>
  );
};

export default App;
